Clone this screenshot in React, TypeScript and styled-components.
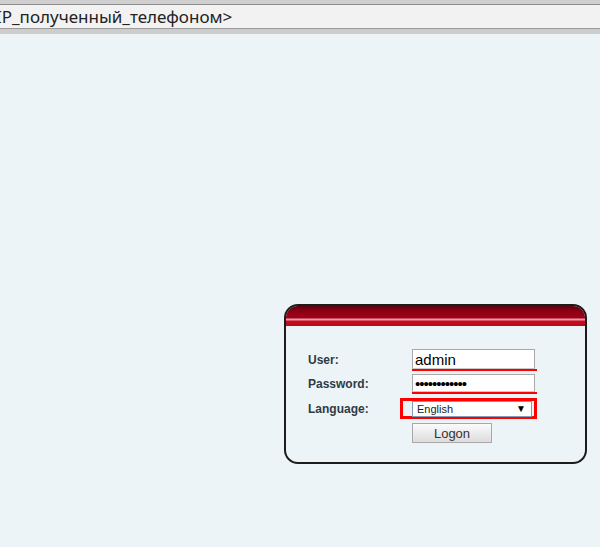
import styled, { createGlobalStyle } from "styled-components";

const GlobalStyle = createGlobalStyle`
  html, body {
    margin: 0;
    padding: 0;
    background: #edf4f7;
  }
  body {
    font-family: Arial, "Liberation Sans", sans-serif;
  }
`;

const AddressBar = styled.div`
  height: 25px;
  background: #f2f2f2;
  border-top: 4px solid #cfcfcf;
  box-shadow: inset 0 1px 0 #8e8e8e;
  border-bottom: 5px solid #cdcdcd;
  display: flex;
  align-items: center;
  overflow: hidden;
  position: relative;
  &::after {
    content: "";
    position: absolute;
    left: 0;
    right: 0;
    bottom: 0;
    height: 1px;
    background: #9a9a9a;
  }
`;

const AddressText = styled.span`
  font-family: "Noto Sans", "Open Sans", sans-serif;
  font-size: 17px;
  color: #222;
  margin-left: -4px;
  white-space: nowrap;
`;

const Main = styled.div`
  padding: 270px 0 0 284px;
  min-height: 512px;
  box-sizing: border-box;
`;

const Panel = styled.div`
  width: 303px;
  height: 160px;
  box-sizing: border-box;
  border: 2px solid #1c1c1c;
  border-radius: 14px;
  overflow: hidden;
  background: #edf4f7;
`;

const PanelHead = styled.div`
  height: 20px;
  background: linear-gradient(
    to bottom,
    #5e000c 0px,
    #8a0014 5px,
    #a3001a 12px,
    #e8a0a8 13px,
    #e8a0a8 14px,
    #c80d1f 15px,
    #b80a1a 20px
  );
`;

const Form = styled.div`
  padding: 23px 0 0 22px;
  display: flex;
  flex-direction: column;
`;

const Row = styled.div<{ $h: number; $gap?: number }>`
  display: grid;
  grid-template-columns: 104px auto;
  align-items: center;
  height: ${(p) => p.$h}px;
  margin-bottom: ${(p) => p.$gap ?? 0}px;
`;

const Label = styled.span`
  font-size: 12px;
  font-weight: bold;
  color: #2d3b44;
`;

const Field = styled.div`
  width: 125px;
  border-bottom: 2px solid #f00;
`;

const Input = styled.input`
  display: block;
  width: 123px;
  height: 20px;
  box-sizing: border-box;
  border: 1px solid #a9a9a9;
  border-bottom-color: #c8c8c8;
  background: #fff;
  padding: 0 2px;
  font-family: Arial, "Liberation Sans", sans-serif;
  font-size: 15px;
  color: #000;
  outline: none;
`;

const PasswordInput = styled(Input)`
  height: 18px;
  font-size: 15px;
  letter-spacing: -1px;
`;

const SelectFrame = styled.div`
  margin-left: -12px;
  width: 137px;
  height: 21px;
  box-sizing: border-box;
  border: 3px solid #f00;
  padding-left: 9px;
  display: flex;
  align-items: center;
`;

const Select = styled.div`
  width: 120px;
  height: 16px;
  box-sizing: border-box;
  border: 1px solid #7f9db9;
  background: #fff;
  display: flex;
  align-items: center;
  justify-content: space-between;
  padding: 0 5px 0 4px;
  font-size: 11px;
  color: #222;
`;

const Arrow = styled.span`
  font-size: 10px;
  color: #000;
`;

const Button = styled.button`
  width: 80px;
  height: 20px;
  box-sizing: border-box;
  border: 1px solid #a8a8a8;
  background: linear-gradient(to bottom, #fbfbfb, #dcdcdc);
  font-family: Arial, "Liberation Sans", sans-serif;
  font-size: 13px;
  color: #333;
  padding: 0;
`;

export default function App() {
  return (
    <>
      <GlobalStyle />
      <AddressBar>
        <AddressText>IP_полученный_телефоном&gt;</AddressText>
      </AddressBar>
      <Main>
        <Panel>
          <PanelHead />
          <Form>
            <Row $h={22} $gap={3}>
              <Label>User:</Label>
              <Field>
                <Input defaultValue="admin" />
              </Field>
            </Row>
            <Row $h={20} $gap={4}>
              <Label>Password:</Label>
              <Field>
                <PasswordInput type="password" defaultValue="adminpassw12" />
              </Field>
            </Row>
            <Row $h={21} $gap={4}>
              <Label>Language:</Label>
              <SelectFrame>
                <Select>
                  <span>English</span>
                  <Arrow>▼</Arrow>
                </Select>
              </SelectFrame>
            </Row>
            <Row $h={20}>
              <span />
              <Button>Logon</Button>
            </Row>
          </Form>
        </Panel>
      </Main>
    </>
  );
}
